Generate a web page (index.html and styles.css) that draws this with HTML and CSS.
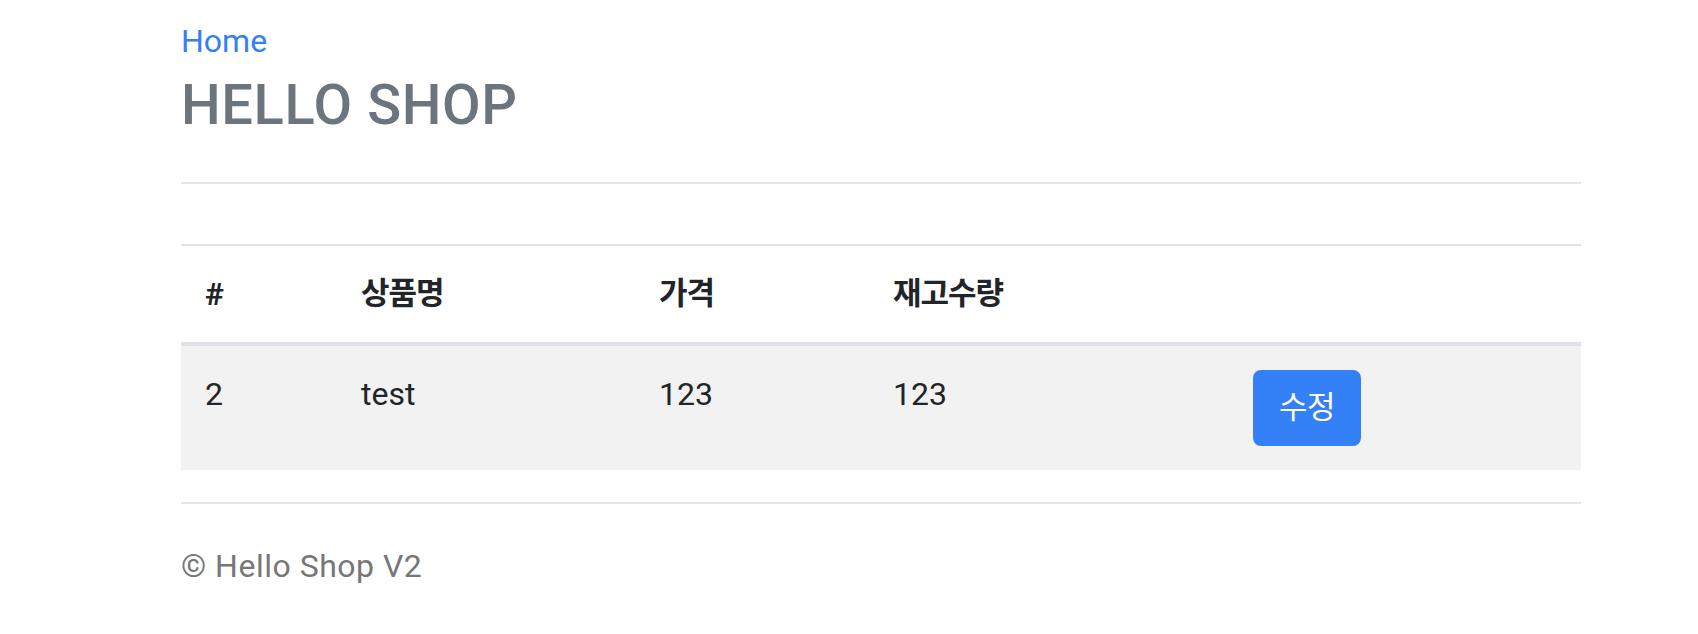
FILE: index.html
```html
<!DOCTYPE html>
<html lang="ko">
<head>
<meta charset="utf-8">
<title>HELLO SHOP</title>
<link rel="stylesheet" href="styles.css">
</head>
<body>
<div class="container">
  <div class="header">
    <ul class="nav">
      <li><a class="nav-link" href="#">Home</a></li>
    </ul>
    <a class="brand" href="#"><h3 class="title">HELLO SHOP</h3></a>
  </div>

  <table class="table">
    <thead>
      <tr>
        <th class="col-id">#</th>
        <th class="col-name ko">상품명</th>
        <th class="col-price ko">가격</th>
        <th class="col-stock ko">재고수량</th>
        <th class="col-action"></th>
      </tr>
    </thead>
    <tbody>
      <tr class="striped">
        <td>2</td>
        <td>test</td>
        <td>123</td>
        <td>123</td>
        <td><a class="btn" href="#">수정</a></td>
      </tr>
    </tbody>
  </table>

  <div class="footer">
    <p class="copy">© Hello Shop V2</p>
  </div>
</div>
</body>
</html>
```

FILE: styles.css
```css
* {
  box-sizing: border-box;
}

html, body {
  margin: 0;
  padding: 0;
  background: #ffffff;
}

body {
  font-family: Roboto, "Noto Sans CJK KR", "Liberation Sans", sans-serif;
  font-size: 32px;
  line-height: 48px;
  color: #212529;
}

.container {
  width: 1400px;
  margin-left: 181px;
}

.header {
  padding-top: 17px;
  padding-bottom: 27px;
  border-bottom: 2px solid #e5e5e5;
}

.nav {
  list-style: none;
  margin: 0;
  padding: 0;
  display: flex;
}

.nav-link {
  color: #3480f6;
  text-decoration: none;
  font-size: 32px;
  line-height: 48px;
}

.brand {
  text-decoration: none;
  display: block;
}

.title {
  margin: 7px 0 16px;
  font-size: 56px;
  line-height: 67px;
  font-weight: 500;
  letter-spacing: 0.6px;
  color: #6c757d;
}

.table {
  width: 100%;
  margin-top: 60px;
  margin-bottom: 32px;
  border-collapse: collapse;
}

.table th,
.table td {
  padding: 24px;
  text-align: left;
  line-height: 48px;
  height: 48px;
}

.table th {
  border-top: 2px solid #dee2e6;
  border-bottom: 4px solid #dee2e6;
  font-weight: 700;
  vertical-align: bottom;
}

.table td {
  vertical-align: top;
}

.ko {
  font-size: 31px;
  letter-spacing: -1px;
}

.col-id { width: 156px; }
.col-name { width: 298px; }
.col-price { width: 234px; }
.col-stock { width: 360px; }

.striped {
  background: #f2f2f2;
}

.btn {
  display: inline-block;
  vertical-align: top;
  padding: 12px 24px;
  border: 2px solid #3480f6;
  border-radius: 8px;
  background: #3480f6;
  color: #ffffff;
  font-size: 31px;
  letter-spacing: -0.5px;
  line-height: 48px;
  text-decoration: none;
}

.footer {
  border-top: 2px solid #e5e5e5;
  padding-top: 38px;
  color: #777777;
}

.copy {
  margin: 0;
  font-size: 32px;
  line-height: 48px;
  letter-spacing: 0.5px;
}
```
